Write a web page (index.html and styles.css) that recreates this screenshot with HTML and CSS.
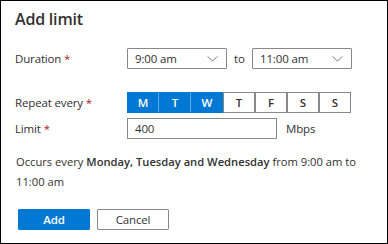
FILE: index.html
```html
<!DOCTYPE html>
<html lang="en">
<head>
  <meta charset="UTF-8" />
  <title>Add limit</title>
  <link rel="stylesheet" href="styles.css">
</head>
<body>
  <div class="panel">
    <h1>Add limit</h1>

    <div class="row row-duration">
      <label class="label">Duration <span class="req">*</span></label>
      <div class="select">
        <span>9:00 am</span>
        <svg width="12" height="7" viewBox="0 0 12 7"><path d="M0.5 0.5 L6 6 L11.5 0.5" fill="none" stroke="#605e5c" stroke-width="1"/></svg>
      </div>
      <span class="to">to</span>
      <div class="select">
        <span>11:00 am</span>
        <svg width="12" height="7" viewBox="0 0 12 7"><path d="M0.5 0.5 L6 6 L11.5 0.5" fill="none" stroke="#605e5c" stroke-width="1"/></svg>
      </div>
    </div>

    <div class="row row-repeat">
      <label class="label">Repeat every <span class="req">*</span></label>
      <div class="days">
        <button class="day on">M</button>
        <button class="day on">T</button>
        <button class="day on">W</button>
        <button class="day">T</button>
        <button class="day">F</button>
        <button class="day">S</button>
        <button class="day">S</button>
      </div>
    </div>

    <div class="row row-limit">
      <label class="label">Limit <span class="req">*</span></label>
      <input class="limit" type="text" value="400" />
      <span class="unit">Mbps</span>
    </div>

    <p class="summary">
      <span>Occurs every <strong>Monday, Tuesday and Wednesday</strong> from 9:00 am to</span>
      <span class="line">11:00 am</span>
    </p>

    <div class="actions">
      <button class="btn primary">Add</button>
      <button class="btn">Cancel</button>
    </div>
  </div>
</body>
</html>
```

FILE: styles.css
```css
* {
  margin: 0;
  padding: 0;
  box-sizing: border-box;
}

body {
  font-family: "Open Sans", Arial, sans-serif;
  font-size: 11.5px;
  letter-spacing: -0.15px;
  color: #323130;
  background: #ffffff;
}

.panel {
  width: 388px;
  height: 244px;
  border: 1px solid #000000;
  padding: 7px 14px 0 14px;
}

h1 {
  font-size: 16px;
  font-weight: 600;
  line-height: 22px;
  letter-spacing: -0.2px;
  color: #323130;
}

.row {
  display: flex;
  align-items: center;
}

.label {
  width: 112px;
  flex-shrink: 0;
}

.req {
  color: #a4262c;
}

.row-duration {
  margin-top: 18px;
  height: 21px;
}

.select {
  width: 100px;
  height: 21px;
  border: 1px solid #8a8886;
  border-radius: 1px;
  display: flex;
  align-items: center;
  justify-content: space-between;
  padding: 0 8px 0 7px;
}

.select svg {
  width: 11px;
  height: 6px;
}

.to {
  width: 25px;
  padding-left: 7px;
}

.row-repeat {
  margin-top: 23px;
  height: 21px;
}

.days {
  display: flex;
}

.day {
  width: 32px;
  height: 21px;
  border: 1px solid #8a8886;
  background: #ffffff;
  font-family: inherit;
  font-size: 11.5px;
  font-weight: 600;
  color: #323130;
}

.day.on {
  background: #0078d4;
  border-color: #0078d4;
  border-right-color: #5ea8e6;
  color: #ffffff;
}

.day.on:nth-child(3) {
  border-right-color: #0078d4;
}

.row-limit {
  margin-top: 5px;
  height: 21px;
}

.limit {
  width: 150px;
  height: 21px;
  border: 1px solid #8a8886;
  padding: 0 7px;
  font-family: inherit;
  font-size: 11.5px;
  letter-spacing: -0.15px;
  color: #323130;
}

.unit {
  margin-left: 9px;
}

.summary {
  margin-top: 13px;
  font-size: 11.2px;
  letter-spacing: 0;
  line-height: 20px;
  padding-left: 1px;
}

.summary span {
  display: block;
  white-space: nowrap;
}

.summary strong {
  font-weight: 600;
}

.actions {
  display: flex;
  gap: 7px;
  margin-top: 17px;
  padding-left: 3px;
}

.btn {
  width: 72px;
  height: 21px;
  border: 1px solid #8a8886;
  background: #ffffff;
  font-family: inherit;
  font-size: 11.5px;
  letter-spacing: -0.15px;
  color: #323130;
  border-radius: 1px;
}

.btn.primary {
  background: #0078d4;
  border-color: #0078d4;
  color: #ffffff;
  font-weight: 600;
}
```
